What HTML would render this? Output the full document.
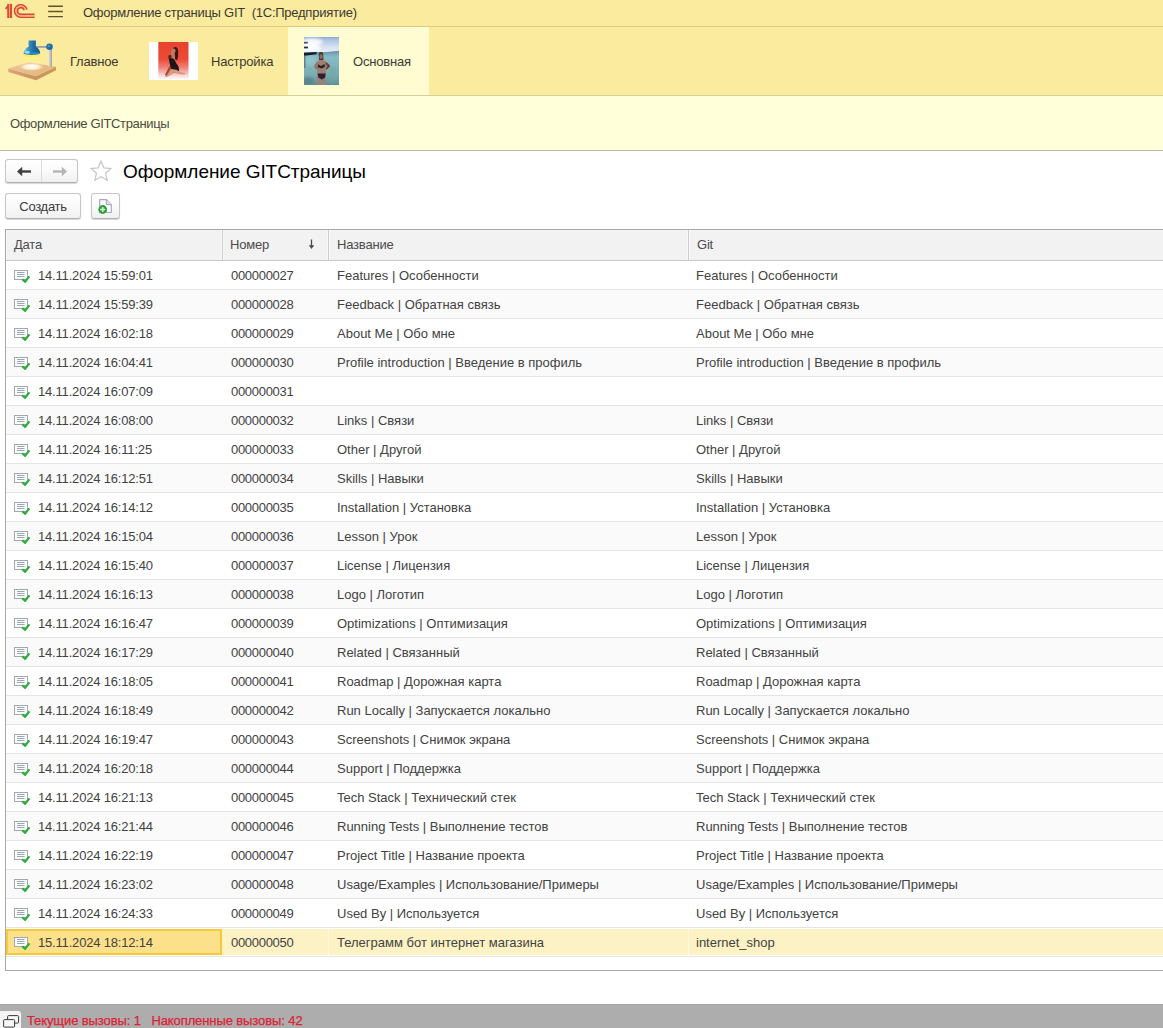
<!DOCTYPE html>
<html lang="ru"><head><meta charset="utf-8"><title>Оформление страницы GIT</title>
<style>
html,body{margin:0;padding:0;}
body{width:1163px;height:1028px;overflow:hidden;background:#fff;font-family:"Liberation Sans",Arial,sans-serif;font-size:13px;color:#3b3b3b;position:relative;}
.abs{position:absolute;}
#titlebar{left:0;top:0;width:1163px;height:26px;background:#fbeb9e;border-bottom:1px solid #dccb7c;}
#titlebar .t{left:83px;top:5px;font-size:13px;color:#3a3a32;white-space:nowrap;letter-spacing:-0.25px;}
#sections{left:0;top:27px;width:1163px;height:68px;background:#fbeb9e;border-bottom:1px solid #d8cf94;}
#sections .seltab{left:288px;top:0;width:141px;height:68px;background:#fffcd2;}
#sections .lbl{font-size:13px;color:#3a3a32;top:27px;white-space:nowrap;letter-spacing:-0.2px;}
#openpanel{left:0;top:96px;width:1163px;height:54px;background:#ffffd9;border-bottom:1px solid #b9b9ad;}
#openpanel .lbl{left:10px;top:20px;font-size:13px;color:#4a4a42;white-space:nowrap;letter-spacing:-0.35px;}
.btn{border:1px solid #c6c6c6;border-bottom-color:#b0b0b0;border-radius:3px;background:linear-gradient(#ffffff,#fafafa 50%,#f0f0f0);box-shadow:0 1px 1px rgba(0,0,0,.16);box-sizing:border-box;}
#navbtns{left:5px;top:159px;width:73px;height:24px;}
#navbtns .sep{left:35px;top:0;width:1px;height:22px;background:#dcdcdc;}
#title{left:123px;top:161px;font-size:19px;line-height:22px;color:#000;white-space:nowrap;letter-spacing:-0.05px;}
#create{left:5px;top:193px;width:76px;height:26px;font-size:13px;line-height:25px;text-align:center;color:#3a3a3a;letter-spacing:-0.3px;}
#newcopy{left:91px;top:193px;width:29px;height:26px;}
#table{left:5px;top:229px;width:1170px;height:742px;border:1px solid #a9a9a9;box-sizing:border-box;background:#fff;}
.th{position:absolute;top:0;height:31px;background:#f2f2f2;border-bottom:1px solid #c9c9c9;border-right:1px solid #cdcdcd;box-shadow:inset 1px 0 0 #f8f8f8,inset -1px 0 0 #f8f8f8;box-sizing:border-box;font-size:13px;line-height:29px;color:#4a4a4a;padding-left:8px;letter-spacing:-0.2px;}
.tr{position:relative;width:1168px;height:29px;border-bottom:1px solid #e4e4e4;box-sizing:border-box;}
.tr.alt{background:#fafafa;}
.tr.sel{background:linear-gradient(#fff 0,#fff 1px,#fdf2c4 1px,#fdf2c4 27px,#fff 27px);}
.td{position:absolute;top:0;height:28px;line-height:29px;font-size:13px;color:#424242;white-space:nowrap;}
.c1{left:0;width:215px;letter-spacing:-0.18px;}
.c1 span{position:absolute;left:32px;}
.c1 .di{position:absolute;left:7px;top:8px;}
.vs{position:absolute;top:1px;width:1px;height:26px;background:#fff9e2;}
.c2{left:225px;letter-spacing:-0.3px;}
.c3{left:331px;}
.c4{left:690px;}
.tr.sel .c1{background:#fde08a;border:2px solid #f7c93a;box-sizing:border-box;top:1px;height:26px;line-height:23px;width:216px;}
.tr.sel .c1 span{left:30px;}
.tr.sel .c1 .di{left:5px;top:5px;}
#status{left:0;top:1004px;width:1163px;height:24px;background:#adadad;border-top:1px solid #a3a3a3;box-sizing:border-box;}
#status .ico{left:0;top:6px;width:21px;height:17px;background:#f4f4f4;border-top-right-radius:3px;}
#status .t{left:27px;top:8px;font-size:13px;color:#de2236;-webkit-text-stroke:0.25px #de2236;white-space:nowrap;letter-spacing:-0.1px;}
</style></head><body>
<div id="titlebar" class="abs">
<svg class="abs" style="left:0;top:0" width="70" height="24" viewBox="0 0 70 24">
<path d="M5.600 8.800L8 6.200" stroke="#dc4a30" stroke-width="1.800" fill="none"/>
<path d="M8.100 3.900V18" stroke="#dc4a30" stroke-width="1.800" fill="none"/>
<path d="M11 3.900V18" stroke="#e0492f" stroke-width="2.100" fill="none"/>
<path d="M9.550 3.900V18" stroke="#f7957c" stroke-width="0.900" fill="none"/>
<path d="M26.960 9.640A6.300 6.300 0 1 0 20.800 17.250H34.600" stroke="#dc472d" stroke-width="1.500" fill="none"/>
<path d="M25.500 9.950A4.800 4.800 0 1 0 20.800 15.750H34.600" stroke="#f9a086" stroke-width="1.500" fill="none" opacity="0.8"/>
<path d="M24.030 10.260A3.300 3.300 0 1 0 20.800 14.250H34.600" stroke="#dc472d" stroke-width="1.500" fill="none"/>
<path d="M48.200 6.300h14.700M48.200 11.450h14.700M48.200 16.600h14.700" stroke="#5c5330" stroke-width="1.400" fill="none"/>
</svg>
<div class="abs t">Оформление страницы GIT&nbsp; (1С:Предприятие)</div>
</div>
<div id="sections" class="abs">
<div class="abs seltab"></div>
<svg class="abs" style="left:6px;top:10px" width="54" height="44" viewBox="6 37 54 44">
<defs>
<linearGradient id="wd" x1="0" y1="0" x2="1" y2="0"><stop offset="0" stop-color="#dba27c"/><stop offset="0.600" stop-color="#c8935c"/><stop offset="1" stop-color="#c69a5a"/></linearGradient>
<linearGradient id="wt" x1="0" y1="0" x2="1" y2="0.400"><stop offset="0" stop-color="#ecc29a"/><stop offset="1" stop-color="#e4b87c"/></linearGradient>
<radialGradient id="lt" cx="0.5" cy="0.5" r="0.5"><stop offset="0" stop-color="#ffffff"/><stop offset="0.55" stop-color="#fff7e0" stop-opacity="0.9"/><stop offset="1" stop-color="#f6dca8" stop-opacity="0"/></radialGradient>
<linearGradient id="sh" x1="0" y1="0" x2="1" y2="0"><stop offset="0" stop-color="#8fd8ea"/><stop offset="0.300" stop-color="#3a93c4"/><stop offset="0.600" stop-color="#1f6ea6"/><stop offset="1" stop-color="#15588a"/></linearGradient>
<linearGradient id="pl" x1="0" y1="0" x2="1" y2="0"><stop offset="0" stop-color="#efeae0"/><stop offset="0.5" stop-color="#d0c8bc"/><stop offset="1" stop-color="#9c948a"/></linearGradient>
<linearGradient id="gl" x1="0" y1="0" x2="0" y2="1"><stop offset="0" stop-color="#fff04a" stop-opacity="0.85"/><stop offset="1" stop-color="#fff7b0" stop-opacity="0.2"/></linearGradient>
</defs>
<path d="M8.400 68.500L36.100 76.300L56 66.700V70.200L36.100 80.200L8.400 72z" fill="url(#wd)"/>
<path d="M8.4 68.5L28.9 62.3L56 66.7L36.1 76.3z" fill="url(#wt)"/>
<ellipse cx="31.500" cy="66.800" rx="13" ry="4.200" fill="url(#lt)"/>
<path d="M24.5 54.5h15l2 9h-20z" fill="url(#gl)"/>
<rect x="48.2" y="48" width="3.6" height="18.4" fill="url(#pl)"/>
<path d="M35.5 46.3h13v1.3h-13z" fill="#6f87a6"/>
<circle cx="49.500" cy="46.800" r="3.300" fill="#1d6fa6"/>
<circle cx="48.700" cy="46" r="1.300" fill="#3f9ccc"/>
<path d="M28.6 40.6h7.3v6.2c2.2 1.2 4 3.4 4.3 6.2c-2.5 1.9-14 1.9-16.8 0c.4-2.8 2.6-5 5.2-6.2z" fill="url(#sh)"/>
<ellipse cx="31.8" cy="53.3" rx="8.4" ry="1.6" fill="#2a86bd"/>
<ellipse cx="27.3" cy="52.4" rx="2.6" ry="1.3" fill="#bdeaf6" opacity="0.8"/>
</svg>
<svg class="abs" style="left:149px;top:15px" width="49" height="38" viewBox="0 0 49 38">
<defs><linearGradient id="rg" x1="0" y1="0" x2="0" y2="1"><stop offset="0" stop-color="#e6432d"/><stop offset="0.450" stop-color="#ec4a35"/><stop offset="0.680" stop-color="#f0807a"/><stop offset="0.900" stop-color="#f9dcdd"/><stop offset="1" stop-color="#ffffff"/></linearGradient>
<filter id="rb" x="-20%" y="-20%" width="140%" height="140%"><feGaussianBlur stdDeviation="0.450"/></filter></defs>
<rect width="49" height="38" fill="#fff"/>
<rect x="9.300" y="0" width="30.200" height="37.500" fill="url(#rg)"/>
<g filter="url(#rb)">
<path d="M24.500 5.500c2-1.300 4.200-.3 4.500 2.700c.4 3.500.2 7.500-1 10l-2-1c.3-3 .2-5.500-1-7.500c-.8-1.300-1.300-3-.5-4.200z" fill="#3a1512"/>
<path d="M23.600 6.700c1.500-.6 3 .2 3 1.800c0 1.500-.6 2.500-1.700 2.800c1 2.400 1.400 5 1 8l-3.500.6c-1.200-2.500-1-5.200-.2-7.200c-.6-1.500-.4-4.600 1.400-6z" fill="#b87b5e"/>
<path d="M19.600 13.500c1-.8 2.600-.5 3 .6l-.6 3.800l-1.800.3c-.8-1.400-1.100-3.400-.6-4.700z" fill="#5a2018"/>
<path d="M20.300 16.800c1.500-1 4-.5 5 .8l2.200 4.200c2 1.800 2.900 4.500 2.400 7.800l-6.400 1.500c-1.500-3-2.500-5.500-2.500-8.500c-.6-2-1-4.300-.7-5.800z" fill="#1c1412"/>
<path d="M22 27l-5.500 6.500c-.7 1 .2 2 1.500 1.500l8-4.500c3.500 1.800 6.500 2.300 10 1.800c.8-.6.600-1.400-.4-1.500c-3-.2-5.500-1.200-8-3z" fill="#d89a7c"/>
<path d="M20.500 24l-4.400 8.500c0 1.200 1 1.500 1.800.6l4.700-7.100z" fill="#b23f28"/>
</g>
</svg>
<svg class="abs" style="left:304px;top:10px" width="35" height="48" viewBox="0 0 35 48">
<defs>
<linearGradient id="sky" x1="0" y1="0" x2="0" y2="1"><stop offset="0" stop-color="#8ea9d6"/><stop offset="0.150" stop-color="#a9c1e6"/><stop offset="0.650" stop-color="#d6e3f1"/><stop offset="1" stop-color="#e6eef4"/></linearGradient>
<linearGradient id="sea" x1="0" y1="0" x2="0" y2="1"><stop offset="0" stop-color="#6a9fb4"/><stop offset="0.150" stop-color="#86bbc6"/><stop offset="0.700" stop-color="#79adb4"/><stop offset="1" stop-color="#5f8d95"/></linearGradient>
<filter id="bl" x="-20%" y="-20%" width="140%" height="140%"><feGaussianBlur stdDeviation="0.550"/></filter>
<filter id="bl2" x="-20%" y="-20%" width="140%" height="140%"><feGaussianBlur stdDeviation="1.400"/></filter>
<clipPath id="bc"><rect width="35" height="48"/></clipPath>
</defs>
<g clip-path="url(#bc)">
<rect width="35" height="15.500" fill="url(#sky)"/>
<g filter="url(#bl2)"><ellipse cx="8" cy="5" rx="11" ry="3.500" fill="#ffffff" opacity="0.9"/><ellipse cx="5" cy="11" rx="12" ry="3.500" fill="#ffffff" opacity="0.95"/></g>
<rect y="15" width="35" height="33" fill="url(#sea)"/>
<g filter="url(#bl2)"><ellipse cx="6" cy="24" rx="6" ry="5" fill="#9cc9d0" opacity="0.6"/><ellipse cx="29" cy="38" rx="5" ry="8" fill="#6ea5a2" opacity="0.5"/><ellipse cx="4" cy="44" rx="6" ry="4" fill="#4f7880" opacity="0.6"/></g>
<g filter="url(#bl)">
<path d="M20 15.300L35 13.700V15.700H20z" fill="#7a94ac"/>
<rect x="0" y="4.800" width="3.800" height="1.800" fill="#4a535c"/>
<rect x="0" y="9.600" width="4" height="1.800" fill="#25313b"/>
<path d="M0 16L12.600 15V17.200L0 18.800z" fill="#161c22"/>
<rect x="0.200" y="18" width="1.200" height="13" fill="#3e5560" opacity="0.700"/>
<path d="M15.200 15.600c1.400-1.200 3.700-.8 4 1.300l.3 6l-4.400.2l-.4-5c0-1 .1-1.900.5-2.500z" fill="#45362f"/>
<ellipse cx="17.100" cy="19.400" rx="1.700" ry="2.500" fill="#8e6a5a"/>
<path d="M14 23.600c1.800-.9 5-.9 6.800 0l4.200 3.600c1 1 1 2.200.2 3l-3.500 3.200l.1 5.200l-1.100 9.400h-2.700l-.6-6.500l-.8 6.500h-2.900l-.8-9l.3-5.400l-2.400-3.200c-.6-1-.5-2 .1-3z" fill="#a07f70"/>
<path d="M14 27.200l3 1.700l3.400-1.800l.6 3l-3.700 1.300l-3.500-1.200z" fill="#2a2233"/>
<path d="M13.700 36.600h8l-.6 4l-3.200 1.900l-3.500-1.900z" fill="#2b2030"/>
<path d="M21.800 25l3.600 2.700c.8.800.7 1.800 0 2.500l-3 2.600l-.4-1.700l1.600-2.100l-2.100-1.800z" fill="#5a4540"/>
<path d="M13.200 25.200l-2.600 3.200c-.5.800-.4 1.600.2 2.200l2.600 2.600l.3-1.800l-1.400-1.900l1.300-2z" fill="#8f7466"/>
</g>
</g>
</svg>
<div class="abs lbl" style="left:70px">Главное</div>
<div class="abs lbl" style="left:211px">Настройка</div>
<div class="abs lbl" style="left:353px">Основная</div>
</div>
<div id="openpanel" class="abs"><div class="abs lbl">Оформление GITСтраницы</div></div>
<div id="navbtns" class="abs btn"><div class="abs sep"></div>
<svg class="abs" style="left:10px;top:6px" width="16" height="11" viewBox="0 0 16 11"><path d="M15 5.5H3" stroke="#3e3e3e" stroke-width="2.4" fill="none"/><path d="M6.2 0.8L1 5.5l5.2 4.7z" fill="#3e3e3e"/></svg>
<svg class="abs" style="left:46px;top:6px" width="16" height="11" viewBox="0 0 16 11"><path d="M1 5.5h12" stroke="#b4b4b4" stroke-width="2.4" fill="none"/><path d="M9.8 0.8L15 5.5l-5.2 4.7z" fill="#b4b4b4"/></svg>
</div>
<svg class="abs" style="left:89px;top:159px" width="24" height="24" viewBox="0 0 24 24"><path d="M12 2.2l2.9 6.6 7 .7-5.3 4.8 1.5 7-6.1-3.6-6.1 3.6 1.5-7L2.1 9.5l7-.7z" fill="#fff" stroke="#c9c9c9" stroke-width="1.3" stroke-linejoin="miter"/></svg>
<div id="title" class="abs">Оформление GITСтраницы</div>
<div id="create" class="abs btn">Создать</div>
<div id="newcopy" class="abs btn">
<svg class="abs" style="left:6px;top:4px" width="16" height="18" viewBox="0 0 16 18"><path d="M1.700 1.700h6.600l5 5v7.800h-11.600z" fill="#fcfcfd" stroke="#a4acb8" stroke-width="1.200"/><path d="M8.300 1.700v5h5" fill="#dfe4ee" stroke="#9aa3b2" stroke-width="1"/><circle cx="4.700" cy="11.500" r="4.400" fill="#2f9e3e"/><path d="M4.700 8.900v5.200M2.100 11.500h5.200" stroke="#c9f5c9" stroke-width="1.600"/></svg>
</div>
<div id="table" class="abs">
<div class="th" style="left:0;width:217px">Дата</div>
<div class="th" style="left:217px;width:106px;padding-left:7px">Номер<svg style="position:absolute;left:84px;top:9px" width="9" height="11" viewBox="0 0 9 11"><path d="M4.500 0.500V8" stroke="#4a4a4a" stroke-width="1.300" fill="none"/><path d="M1.800 6.300L4.500 10L7.200 6.300z" fill="#4a4a4a"/></svg></div>
<div class="th" style="left:323px;width:360px">Название</div>
<div class="th" style="left:683px;width:485px;border-right:none">Git</div>
<div id="rows" style="position:absolute;left:0;top:31px;">
<div class="tr "><div class="td c1"><svg class="di" width="18" height="14" viewBox="0 0 18 14"><rect x="1.5" y="1.5" width="13" height="9" fill="#fbfcfd" stroke="#a3a8ae"/><path d="M4 3.5h7.5M4 5.5h7.5M4 7.5h7.5" stroke="#9aa7b4" stroke-width="1" fill="none"/><path d="M9.2 10.2l2.9 2.6l4.3-5.4" stroke="#2fab3c" stroke-width="2.2" fill="none"/></svg><span>14.11.2024 15:59:01</span></div><div class="td c2">000000027</div><div class="td c3">Features | Особенности</div><div class="td c4">Features | Особенности</div></div>
<div class="tr alt"><div class="td c1"><svg class="di" width="18" height="14" viewBox="0 0 18 14"><rect x="1.5" y="1.5" width="13" height="9" fill="#fbfcfd" stroke="#a3a8ae"/><path d="M4 3.5h7.5M4 5.5h7.5M4 7.5h7.5" stroke="#9aa7b4" stroke-width="1" fill="none"/><path d="M9.2 10.2l2.9 2.6l4.3-5.4" stroke="#2fab3c" stroke-width="2.2" fill="none"/></svg><span>14.11.2024 15:59:39</span></div><div class="td c2">000000028</div><div class="td c3">Feedback | Обратная связь</div><div class="td c4">Feedback | Обратная связь</div></div>
<div class="tr "><div class="td c1"><svg class="di" width="18" height="14" viewBox="0 0 18 14"><rect x="1.5" y="1.5" width="13" height="9" fill="#fbfcfd" stroke="#a3a8ae"/><path d="M4 3.5h7.5M4 5.5h7.5M4 7.5h7.5" stroke="#9aa7b4" stroke-width="1" fill="none"/><path d="M9.2 10.2l2.9 2.6l4.3-5.4" stroke="#2fab3c" stroke-width="2.2" fill="none"/></svg><span>14.11.2024 16:02:18</span></div><div class="td c2">000000029</div><div class="td c3">About Me | Обо мне</div><div class="td c4">About Me | Обо мне</div></div>
<div class="tr alt"><div class="td c1"><svg class="di" width="18" height="14" viewBox="0 0 18 14"><rect x="1.5" y="1.5" width="13" height="9" fill="#fbfcfd" stroke="#a3a8ae"/><path d="M4 3.5h7.5M4 5.5h7.5M4 7.5h7.5" stroke="#9aa7b4" stroke-width="1" fill="none"/><path d="M9.2 10.2l2.9 2.6l4.3-5.4" stroke="#2fab3c" stroke-width="2.2" fill="none"/></svg><span>14.11.2024 16:04:41</span></div><div class="td c2">000000030</div><div class="td c3">Profile introduction | Введение в профиль</div><div class="td c4">Profile introduction | Введение в профиль</div></div>
<div class="tr "><div class="td c1"><svg class="di" width="18" height="14" viewBox="0 0 18 14"><rect x="1.5" y="1.5" width="13" height="9" fill="#fbfcfd" stroke="#a3a8ae"/><path d="M4 3.5h7.5M4 5.5h7.5M4 7.5h7.5" stroke="#9aa7b4" stroke-width="1" fill="none"/><path d="M9.2 10.2l2.9 2.6l4.3-5.4" stroke="#2fab3c" stroke-width="2.2" fill="none"/></svg><span>14.11.2024 16:07:09</span></div><div class="td c2">000000031</div><div class="td c3"></div><div class="td c4"></div></div>
<div class="tr alt"><div class="td c1"><svg class="di" width="18" height="14" viewBox="0 0 18 14"><rect x="1.5" y="1.5" width="13" height="9" fill="#fbfcfd" stroke="#a3a8ae"/><path d="M4 3.5h7.5M4 5.5h7.5M4 7.5h7.5" stroke="#9aa7b4" stroke-width="1" fill="none"/><path d="M9.2 10.2l2.9 2.6l4.3-5.4" stroke="#2fab3c" stroke-width="2.2" fill="none"/></svg><span>14.11.2024 16:08:00</span></div><div class="td c2">000000032</div><div class="td c3">Links | Связи</div><div class="td c4">Links | Связи</div></div>
<div class="tr "><div class="td c1"><svg class="di" width="18" height="14" viewBox="0 0 18 14"><rect x="1.5" y="1.5" width="13" height="9" fill="#fbfcfd" stroke="#a3a8ae"/><path d="M4 3.5h7.5M4 5.5h7.5M4 7.5h7.5" stroke="#9aa7b4" stroke-width="1" fill="none"/><path d="M9.2 10.2l2.9 2.6l4.3-5.4" stroke="#2fab3c" stroke-width="2.2" fill="none"/></svg><span>14.11.2024 16:11:25</span></div><div class="td c2">000000033</div><div class="td c3">Other | Другой</div><div class="td c4">Other | Другой</div></div>
<div class="tr alt"><div class="td c1"><svg class="di" width="18" height="14" viewBox="0 0 18 14"><rect x="1.5" y="1.5" width="13" height="9" fill="#fbfcfd" stroke="#a3a8ae"/><path d="M4 3.5h7.5M4 5.5h7.5M4 7.5h7.5" stroke="#9aa7b4" stroke-width="1" fill="none"/><path d="M9.2 10.2l2.9 2.6l4.3-5.4" stroke="#2fab3c" stroke-width="2.2" fill="none"/></svg><span>14.11.2024 16:12:51</span></div><div class="td c2">000000034</div><div class="td c3">Skills | Навыки</div><div class="td c4">Skills | Навыки</div></div>
<div class="tr "><div class="td c1"><svg class="di" width="18" height="14" viewBox="0 0 18 14"><rect x="1.5" y="1.5" width="13" height="9" fill="#fbfcfd" stroke="#a3a8ae"/><path d="M4 3.5h7.5M4 5.5h7.5M4 7.5h7.5" stroke="#9aa7b4" stroke-width="1" fill="none"/><path d="M9.2 10.2l2.9 2.6l4.3-5.4" stroke="#2fab3c" stroke-width="2.2" fill="none"/></svg><span>14.11.2024 16:14:12</span></div><div class="td c2">000000035</div><div class="td c3">Installation | Установка</div><div class="td c4">Installation | Установка</div></div>
<div class="tr alt"><div class="td c1"><svg class="di" width="18" height="14" viewBox="0 0 18 14"><rect x="1.5" y="1.5" width="13" height="9" fill="#fbfcfd" stroke="#a3a8ae"/><path d="M4 3.5h7.5M4 5.5h7.5M4 7.5h7.5" stroke="#9aa7b4" stroke-width="1" fill="none"/><path d="M9.2 10.2l2.9 2.6l4.3-5.4" stroke="#2fab3c" stroke-width="2.2" fill="none"/></svg><span>14.11.2024 16:15:04</span></div><div class="td c2">000000036</div><div class="td c3">Lesson | Урок</div><div class="td c4">Lesson | Урок</div></div>
<div class="tr "><div class="td c1"><svg class="di" width="18" height="14" viewBox="0 0 18 14"><rect x="1.5" y="1.5" width="13" height="9" fill="#fbfcfd" stroke="#a3a8ae"/><path d="M4 3.5h7.5M4 5.5h7.5M4 7.5h7.5" stroke="#9aa7b4" stroke-width="1" fill="none"/><path d="M9.2 10.2l2.9 2.6l4.3-5.4" stroke="#2fab3c" stroke-width="2.2" fill="none"/></svg><span>14.11.2024 16:15:40</span></div><div class="td c2">000000037</div><div class="td c3">License | Лицензия</div><div class="td c4">License | Лицензия</div></div>
<div class="tr alt"><div class="td c1"><svg class="di" width="18" height="14" viewBox="0 0 18 14"><rect x="1.5" y="1.5" width="13" height="9" fill="#fbfcfd" stroke="#a3a8ae"/><path d="M4 3.5h7.5M4 5.5h7.5M4 7.5h7.5" stroke="#9aa7b4" stroke-width="1" fill="none"/><path d="M9.2 10.2l2.9 2.6l4.3-5.4" stroke="#2fab3c" stroke-width="2.2" fill="none"/></svg><span>14.11.2024 16:16:13</span></div><div class="td c2">000000038</div><div class="td c3">Logo | Логотип</div><div class="td c4">Logo | Логотип</div></div>
<div class="tr "><div class="td c1"><svg class="di" width="18" height="14" viewBox="0 0 18 14"><rect x="1.5" y="1.5" width="13" height="9" fill="#fbfcfd" stroke="#a3a8ae"/><path d="M4 3.5h7.5M4 5.5h7.5M4 7.5h7.5" stroke="#9aa7b4" stroke-width="1" fill="none"/><path d="M9.2 10.2l2.9 2.6l4.3-5.4" stroke="#2fab3c" stroke-width="2.2" fill="none"/></svg><span>14.11.2024 16:16:47</span></div><div class="td c2">000000039</div><div class="td c3">Optimizations | Оптимизация</div><div class="td c4">Optimizations | Оптимизация</div></div>
<div class="tr alt"><div class="td c1"><svg class="di" width="18" height="14" viewBox="0 0 18 14"><rect x="1.5" y="1.5" width="13" height="9" fill="#fbfcfd" stroke="#a3a8ae"/><path d="M4 3.5h7.5M4 5.5h7.5M4 7.5h7.5" stroke="#9aa7b4" stroke-width="1" fill="none"/><path d="M9.2 10.2l2.9 2.6l4.3-5.4" stroke="#2fab3c" stroke-width="2.2" fill="none"/></svg><span>14.11.2024 16:17:29</span></div><div class="td c2">000000040</div><div class="td c3">Related | Связанный</div><div class="td c4">Related | Связанный</div></div>
<div class="tr "><div class="td c1"><svg class="di" width="18" height="14" viewBox="0 0 18 14"><rect x="1.5" y="1.5" width="13" height="9" fill="#fbfcfd" stroke="#a3a8ae"/><path d="M4 3.5h7.5M4 5.5h7.5M4 7.5h7.5" stroke="#9aa7b4" stroke-width="1" fill="none"/><path d="M9.2 10.2l2.9 2.6l4.3-5.4" stroke="#2fab3c" stroke-width="2.2" fill="none"/></svg><span>14.11.2024 16:18:05</span></div><div class="td c2">000000041</div><div class="td c3">Roadmap | Дорожная карта</div><div class="td c4">Roadmap | Дорожная карта</div></div>
<div class="tr alt"><div class="td c1"><svg class="di" width="18" height="14" viewBox="0 0 18 14"><rect x="1.5" y="1.5" width="13" height="9" fill="#fbfcfd" stroke="#a3a8ae"/><path d="M4 3.5h7.5M4 5.5h7.5M4 7.5h7.5" stroke="#9aa7b4" stroke-width="1" fill="none"/><path d="M9.2 10.2l2.9 2.6l4.3-5.4" stroke="#2fab3c" stroke-width="2.2" fill="none"/></svg><span>14.11.2024 16:18:49</span></div><div class="td c2">000000042</div><div class="td c3">Run Locally | Запускается локально</div><div class="td c4">Run Locally | Запускается локально</div></div>
<div class="tr "><div class="td c1"><svg class="di" width="18" height="14" viewBox="0 0 18 14"><rect x="1.5" y="1.5" width="13" height="9" fill="#fbfcfd" stroke="#a3a8ae"/><path d="M4 3.5h7.5M4 5.5h7.5M4 7.5h7.5" stroke="#9aa7b4" stroke-width="1" fill="none"/><path d="M9.2 10.2l2.9 2.6l4.3-5.4" stroke="#2fab3c" stroke-width="2.2" fill="none"/></svg><span>14.11.2024 16:19:47</span></div><div class="td c2">000000043</div><div class="td c3">Screenshots | Снимок экрана</div><div class="td c4">Screenshots | Снимок экрана</div></div>
<div class="tr alt"><div class="td c1"><svg class="di" width="18" height="14" viewBox="0 0 18 14"><rect x="1.5" y="1.5" width="13" height="9" fill="#fbfcfd" stroke="#a3a8ae"/><path d="M4 3.5h7.5M4 5.5h7.5M4 7.5h7.5" stroke="#9aa7b4" stroke-width="1" fill="none"/><path d="M9.2 10.2l2.9 2.6l4.3-5.4" stroke="#2fab3c" stroke-width="2.2" fill="none"/></svg><span>14.11.2024 16:20:18</span></div><div class="td c2">000000044</div><div class="td c3">Support | Поддержка</div><div class="td c4">Support | Поддержка</div></div>
<div class="tr "><div class="td c1"><svg class="di" width="18" height="14" viewBox="0 0 18 14"><rect x="1.5" y="1.5" width="13" height="9" fill="#fbfcfd" stroke="#a3a8ae"/><path d="M4 3.5h7.5M4 5.5h7.5M4 7.5h7.5" stroke="#9aa7b4" stroke-width="1" fill="none"/><path d="M9.2 10.2l2.9 2.6l4.3-5.4" stroke="#2fab3c" stroke-width="2.2" fill="none"/></svg><span>14.11.2024 16:21:13</span></div><div class="td c2">000000045</div><div class="td c3">Tech Stack | Технический стек</div><div class="td c4">Tech Stack | Технический стек</div></div>
<div class="tr alt"><div class="td c1"><svg class="di" width="18" height="14" viewBox="0 0 18 14"><rect x="1.5" y="1.5" width="13" height="9" fill="#fbfcfd" stroke="#a3a8ae"/><path d="M4 3.5h7.5M4 5.5h7.5M4 7.5h7.5" stroke="#9aa7b4" stroke-width="1" fill="none"/><path d="M9.2 10.2l2.9 2.6l4.3-5.4" stroke="#2fab3c" stroke-width="2.2" fill="none"/></svg><span>14.11.2024 16:21:44</span></div><div class="td c2">000000046</div><div class="td c3">Running Tests | Выполнение тестов</div><div class="td c4">Running Tests | Выполнение тестов</div></div>
<div class="tr "><div class="td c1"><svg class="di" width="18" height="14" viewBox="0 0 18 14"><rect x="1.5" y="1.5" width="13" height="9" fill="#fbfcfd" stroke="#a3a8ae"/><path d="M4 3.5h7.5M4 5.5h7.5M4 7.5h7.5" stroke="#9aa7b4" stroke-width="1" fill="none"/><path d="M9.2 10.2l2.9 2.6l4.3-5.4" stroke="#2fab3c" stroke-width="2.2" fill="none"/></svg><span>14.11.2024 16:22:19</span></div><div class="td c2">000000047</div><div class="td c3">Project Title | Название проекта</div><div class="td c4">Project Title | Название проекта</div></div>
<div class="tr alt"><div class="td c1"><svg class="di" width="18" height="14" viewBox="0 0 18 14"><rect x="1.5" y="1.5" width="13" height="9" fill="#fbfcfd" stroke="#a3a8ae"/><path d="M4 3.5h7.5M4 5.5h7.5M4 7.5h7.5" stroke="#9aa7b4" stroke-width="1" fill="none"/><path d="M9.2 10.2l2.9 2.6l4.3-5.4" stroke="#2fab3c" stroke-width="2.2" fill="none"/></svg><span>14.11.2024 16:23:02</span></div><div class="td c2">000000048</div><div class="td c3">Usage/Examples | Использование/Примеры</div><div class="td c4">Usage/Examples | Использование/Примеры</div></div>
<div class="tr "><div class="td c1"><svg class="di" width="18" height="14" viewBox="0 0 18 14"><rect x="1.5" y="1.5" width="13" height="9" fill="#fbfcfd" stroke="#a3a8ae"/><path d="M4 3.5h7.5M4 5.5h7.5M4 7.5h7.5" stroke="#9aa7b4" stroke-width="1" fill="none"/><path d="M9.2 10.2l2.9 2.6l4.3-5.4" stroke="#2fab3c" stroke-width="2.2" fill="none"/></svg><span>14.11.2024 16:24:33</span></div><div class="td c2">000000049</div><div class="td c3">Used By | Используется</div><div class="td c4">Used By | Используется</div></div>
<div class="tr alt sel"><div class="td c1"><svg class="di" width="18" height="14" viewBox="0 0 18 14"><rect x="1.5" y="1.5" width="13" height="9" fill="#fbfcfd" stroke="#a3a8ae"/><path d="M4 3.5h7.5M4 5.5h7.5M4 7.5h7.5" stroke="#9aa7b4" stroke-width="1" fill="none"/><path d="M9.2 10.2l2.9 2.6l4.3-5.4" stroke="#2fab3c" stroke-width="2.2" fill="none"/></svg><span>15.11.2024 18:12:14</span></div><div class="td c2">000000050</div><div class="td c3">Телеграмм бот интернет магазина</div><div class="td c4">internet_shop</div><div class="vs" style="left:322px"></div><div class="vs" style="left:682px"></div></div>
</div>
</div>
<div id="status" class="abs"><div class="abs ico"><svg class="abs" style="left:2px;top:3px" width="18" height="14" viewBox="0 0 18 14"><rect x="5.6" y="1.6" width="11" height="7.5" rx="1" fill="#f6f6f6" stroke="#3a3a3a" stroke-width="1"/><rect x="1.6" y="5.6" width="11" height="7.5" rx="1" fill="#f6f6f6" stroke="#3a3a3a" stroke-width="1"/></svg></div><div class="abs t">Текущие вызовы: 1&nbsp;&nbsp; Накопленные вызовы: 42</div></div>
</body></html>
